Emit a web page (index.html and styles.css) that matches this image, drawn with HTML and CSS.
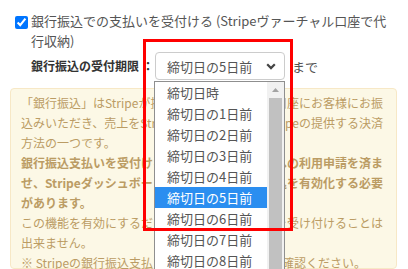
FILE: index.html
```html
<!DOCTYPE html>
<html lang="ja">
<head>
<meta charset="utf-8">
<link rel="stylesheet" href="styles.css">
</head>
<body>
<div class="page">
  <label class="check-row">
    <input type="checkbox" class="check" checked>
    <span class="check-text">銀行振込での支払いを受付ける (Stripeヴァーチャル口座で代行収納)</span>
  </label>
  <div class="deadline-row">
    <span class="deadline-label">銀行振込の受付期限<span class="colon">：</span></span>
    <div class="select">
      <span>締切日の5日前</span>
      <svg class="chevron" width="10" height="7" viewBox="0 0 10 7"><path d="M1.2 1.3 L5 5.1 L8.8 1.3" fill="none" stroke="#444" stroke-width="2.2"/></svg>
    </div>
    <span class="until">まで</span>
  </div>
  <div class="alert">
    <div class="line"><span>「銀行振込」はStripeが提供する</span><span>バーチャル口座にお客様にお振</span></div>
    <div class="line"><span>込みいただき、売上をStripe残高</span><span>に入金するStripeの提供する決済</span></div>
    <div class="line">方法の一つです。</div>
    <div class="line strong"><span>銀行振込支払いを受付ける</span><span>には、Stripeへの利用申請を済ま</span></div>
    <div class="line strong"><span>せ、Stripeダッシュボードで</span><span>銀行振込を有効化する必要</span></div>
    <div class="line strong">があります。</div>
    <div class="line"><span>この機能を有効にするだけで</span><span>は銀行振込を受け付けることは</span></div>
    <div class="line">出来ません。</div>
    <div class="line last"><span>※ Stripeの銀行振込支払い</span><span>はこちらでご確認ください。</span></div>
  </div>
</div>
<div class="dropdown">
  <div class="options">
    <div class="option">締切日時</div>
    <div class="option">締切日の1日前</div>
    <div class="option">締切日の2日前</div>
    <div class="option">締切日の3日前</div>
    <div class="option">締切日の4日前</div>
    <div class="option selected">締切日の5日前</div>
    <div class="option">締切日の6日前</div>
    <div class="option">締切日の7日前</div>
    <div class="option">締切日の8日前</div>
  </div>
  <div class="scrollbar">
    <div class="sb-btn"><svg width="7" height="4" viewBox="0 0 7 4"><path d="M0 4 L3.5 0 L7 4 Z" fill="#a3a3a3"/></svg></div>
    <div class="sb-thumb"></div>
  </div>
</div>
<div class="highlight-frame"></div>
</body>
</html>
```
FILE: styles.css
```css
html, body {
  margin: 0;
  padding: 0;
  background: #fff;
  overflow: hidden;
}
body {
  font-family: "Noto Sans CJK JP", "Noto Sans", sans-serif;
  color: #555;
  width: 408px;
  height: 269px;
}
.page {
  padding: 11px 11px 0 10px;
}
.check-row {
  display: flex;
  align-items: flex-start;
  padding-left: 5px;
  font-size: 13px;
  line-height: 20px;
}
.check {
  width: 13px;
  height: 13px;
  margin: 5px 3px 0 0;
  accent-color: #0075ff;
  flex: none;
}
.check-text {
  max-width: 360px;
}
.deadline-row {
  display: flex;
  align-items: center;
  height: 28px;
  margin-top: 1px;
  padding-left: 21px;
}
.deadline-label {
  font-size: 12px;
  font-weight: bold;
  color: #333;
  line-height: 20px;
  white-space: nowrap;
}
.colon {
  margin-left: 3px;
}
.select {
  box-sizing: border-box;
  width: 130px;
  height: 28px;
  margin-left: 1px;
  border: 1px solid #ccc;
  border-radius: 4px;
  background: #fff;
  display: flex;
  align-items: center;
  justify-content: space-between;
  padding: 0 8px 0 11px;
  font-size: 13px;
  color: #555;
}
.chevron {
  display: block;
}
.until {
  margin-left: 7px;
  font-size: 13px;
}
.alert {
  margin-top: 8px;
  border: 1px solid #f7e8c6;
  border-radius: 4px;
  background: #fcf8e6;
  padding: 4px 13px 0 10px;
  height: 175px;
  font-size: 12px;
  line-height: 20px;
  color: #bb9c64;
}
.line {
  display: flex;
  justify-content: space-between;
  white-space: nowrap;
  height: 20px;
}
.line.strong {
  font-weight: bold;
}
.line.last {
  width: 345px;
}
.dropdown {
  position: absolute;
  left: 154px;
  top: 81px;
  width: 131px;
  height: 188px;
  box-sizing: border-box;
  border: 1px solid #8f8f8f;
  border-bottom: none;
  background: #fff;
  display: flex;
  overflow: hidden;
}
.options {
  flex: 1;
  font-size: 13px;
  color: #555;
}
.option {
  height: 21px;
  line-height: 21px;
  padding-left: 12px;
  white-space: nowrap;
}
.option.selected {
  background: #2b8ef0;
  color: #fff;
}
.scrollbar {
  width: 17px;
  background: #f1f1f1;
  display: flex;
  flex-direction: column;
}
.sb-btn {
  height: 16px;
  display: flex;
  align-items: center;
  justify-content: center;
}
.sb-thumb {
  flex: 1;
  margin: 0 2px;
  background: #c1c1c1;
}
.highlight-frame {
  position: absolute;
  left: 143px;
  top: 39px;
  width: 150px;
  height: 192px;
  box-sizing: border-box;
  border: 3px solid #f00;
}
```
